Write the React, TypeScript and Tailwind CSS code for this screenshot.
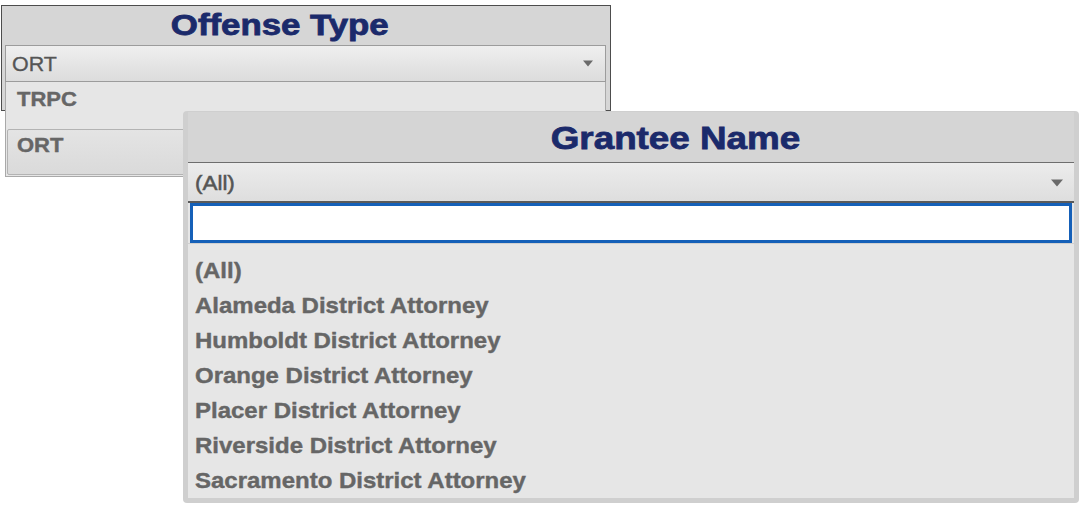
const grantees = [
  '(All)',
  'Alameda District Attorney',
  'Humboldt District Attorney',
  'Orange District Attorney',
  'Placer District Attorney',
  'Riverside District Attorney',
  'Sacramento District Attorney',
];

function Caret({ w = 12, h = 8 }: { w?: number; h?: number }) {
  return (
    <svg width={w} height={h} viewBox="0 0 12 8" className="shrink-0">
      <path d="M0 0.5H12L6 7.5Z" fill="#6a6a6a" />
    </svg>
  );
}

export default function App() {
  return (
    <div className="relative w-[1080px] h-[506px] overflow-hidden bg-white font-['Liberation_Sans',Arial,sans-serif]">
      {/* Offense Type filter, open */}
      <div className="ml-[1px] mt-[5px] w-[610px] h-[106px] border border-[#4d4d4d] bg-[#d6d6d6]">
        <div className="h-[39px] flex items-center justify-center pr-[52px]">
          <span className="inline-block scale-x-[1.2] text-[29px] font-bold leading-none text-[#1b2a6b] [-webkit-text-stroke:0.8px_#1b2a6b]">Offense Type</span>
        </div>
        <div className="ml-[3px] w-[601px] h-[37px] flex items-center justify-between pl-[6px] pr-[12px] border border-[#9c9c9c] bg-linear-to-b from-[#efefef] to-[#dcdcdc]">
          <span className="inline-block origin-left scale-x-[1.07] text-[20px] leading-none text-[#555] [-webkit-text-stroke:0.3px_#555]">ORT</span>
          <Caret w={10} h={7} />
        </div>
        <div className="ml-[3px] w-[601px] h-[95px] border-x border-b border-[#a9a9a9] bg-[#e6e6e6]">
          <div className="h-[34px] flex items-center pl-[11px]">
            <span className="inline-block origin-left scale-x-[1.1] text-[20px] font-bold leading-none text-[#666] [-webkit-text-stroke:0.4px_#666]">TRPC</span>
          </div>
          <div className="mt-[13px] mx-[1px] h-[46px] pl-[9px] pt-[3px] border border-[#b3b3b3] rounded-[2px] bg-linear-to-b from-[#e4e4e4] to-[#dadada]">
            <span className="inline-block origin-left scale-x-[1.1] text-[20px] font-bold leading-[24px] text-[#666] [-webkit-text-stroke:0.4px_#666]">ORT</span>
          </div>
        </div>
      </div>

      {/* Grantee Name filter, open, on top */}
      <div className="absolute left-[183px] top-[111px] w-[896px] px-[5px] pt-[1px] pb-[5px] rounded-[4px] bg-[#cfcfcf]">
        <div className="flex flex-col">
          <div className="h-[51px] flex items-center justify-center pl-[89px] pt-[2px] bg-[#d5d5d5] border-b border-[#6e6e6e]">
            <span className="inline-block scale-x-[1.15] text-[32px] font-bold leading-none text-[#1b2a6b] [-webkit-text-stroke:0.8px_#1b2a6b]">Grantee Name</span>
          </div>
          <div className="h-[40px] flex items-center justify-between pl-[7px] pr-[11px] pt-[2px] border-b-2 border-[#5a5a5a] bg-linear-to-b from-[#ececec] to-[#dedede]">
            <span className="inline-block origin-left scale-x-[1.12] text-[20px] leading-none text-[#555] [-webkit-text-stroke:0.5px_#555]">(All)</span>
            <Caret />
          </div>
          <div className="bg-[#e6e6e6] px-[2px]">
            <div className="h-[40px] border-[3px] border-[#1560b8] bg-white" />
          </div>
          <div className="border-t border-[#d0d0d0] bg-[#e6e6e6] pt-[9px]">
            {grantees.map((g) => (
              <div key={g} className="h-[35px] flex items-center pl-[7px]">
                <span className="inline-block origin-left scale-x-[1.09] text-[22px] font-bold leading-none text-[#666] [-webkit-text-stroke:0.4px_#666]">{g}</span>
              </div>
            ))}
          </div>
        </div>
      </div>
    </div>
  );
}
